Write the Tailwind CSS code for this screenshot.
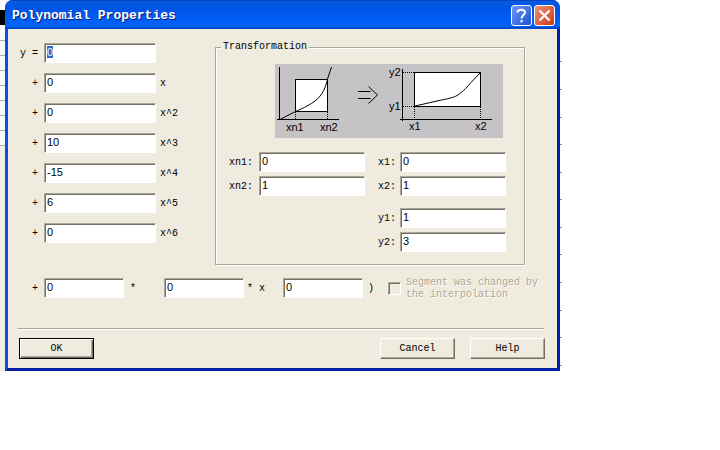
<!DOCTYPE html>
<html lang="en">
<head>
    <meta charset="UTF-8">
    <meta name="viewport" content="width=device-width, initial-scale=1.0">
    <title>Polynomial Properties</title>
    <script src="https://cdn.jsdelivr.net/npm/@tailwindcss/browser@4"></script>
</head>
<body class="relative bg-white font-['Liberation_Mono',monospace] text-[10px] leading-3 text-black">
    <!-- Graph window behind the dialog -->
    <svg class="absolute left-0 top-0 overflow-visible" width="564" height="376" viewBox="0 0 564 376" aria-hidden="true">
        <rect x="0" y="146" width="5" height="228" fill="#f1efe4"/>
        <rect x="5" y="370" width="128" height="4" fill="#ece8f4"/>
        <rect x="144" y="370" width="67" height="4" fill="#ece8f4"/>
        <rect x="0" y="10" width="8" height="15" fill="#000"/>
        <path stroke="#a9a9b4" d="M0 40.5h5M0 55.5h5M0 70.5h5M0 85.5h5M0 100.5h5M0 115.5h5M0 130.5h5M0 145.5h5"/>
        <path stroke="#7c7c94" d="M143.5 370v4"/>
        <path stroke="#000" d="M211.5 370v4"/>
        <path stroke="#7070b8" d="M253.5 370v3M295.5 370v3M337.5 370v3M378.5 370v3M420.5 370v3M461.5 370v3M503.5 370v3M544.5 370v3"/>
        <path stroke="#8888a8" d="M559 61.5h3M559 89.5h3M559 117.5h3M559 144.5h3M559 172.5h3M559 199.5h3M559 227.5h3M559 254.5h3M559 282.5h3M559 310.5h3M559 337.5h3M559 365.5h3"/>
    </svg>

    <main role="dialog" aria-labelledby="title" class="relative ml-[5px] max-w-[555px] overflow-hidden rounded-t-lg bg-[#0a3fd8]">
        <header class="flex h-[29px] items-center gap-0.5 bg-linear-to-b from-[#0a5be0] from-0% via-[#0054e6] via-30% to-[#0062fb] to-85% pl-[7px] pr-[5px] pt-0.5 shadow-[inset_0_-2px_0_#0048d0,inset_0_1px_0_#0844c0]">
            <h1 id="title" class="flex-1 text-[13px] font-bold leading-4 text-white [text-shadow:1px_1px_0_#0a1e80]">Polynomial Properties</h1>
            <button type="button" aria-label="Help" class="size-[21px] rounded-[3px] border border-white bg-linear-to-br from-[#6c97f2] to-[#1c50d8]">
                <svg class="mx-auto" width="19" height="19" viewBox="0 0 19 19" fill="none" stroke="#fff" stroke-width="2">
                    <path d="M5.5 6.5C5.5 3 13 2.8 13 6.5C13 9 9.5 9 9.5 12.500M9.500 14v2.200"/>
                </svg>
            </button>
            <button type="button" aria-label="Close" class="size-[21px] rounded-[3px] border border-white bg-linear-to-br from-[#f09070] to-[#cc3410]">
                <svg class="mx-auto" width="19" height="19" viewBox="0 0 19 19" fill="none" stroke="#fff" stroke-width="2.200">
                    <path d="M4.5 4.5l10 10M14.5 4.5l-10 10"/>
                </svg>
            </button>
        </header>

        <form class="border-x-3 border-b-3 border-b-[#0420a8] border-l-[#0c4fe0] border-r-[#0420a8] bg-[#efebde] pb-[9px] pt-3 [&_label]:pt-0.5 [&_span]:pt-0.5">
            <div class="flex">
                <!-- Coefficients -->
                <div class="mt-0.5 flex w-[207px] flex-col gap-2.5">
                    <div class="flex h-5 items-center">
                        <label for="c0" class="mr-1.5 w-[30px] text-right">y =</label>
                        <input id="c0" value="0" class="h-5 w-[112px] border border-b-white border-l-[#aca899] border-r-white border-t-[#aca899] bg-white pb-0.5 pl-0.5 font-['Liberation_Sans',sans-serif] text-[11px] caret-transparent shadow-[inset_1px_1px_0_#716f64] outline-none selection:bg-[#316ac5] selection:text-white">
                    </div>
                    <div class="flex h-5 items-center">
                        <label for="c1" class="mr-1.5 w-[30px] text-right">+</label>
                        <input id="c1" value="0" class="h-5 w-[112px] border border-b-white border-l-[#aca899] border-r-white border-t-[#aca899] bg-white pb-0.5 pl-0.5 font-['Liberation_Sans',sans-serif] text-[11px] shadow-[inset_1px_1px_0_#716f64]">
                        <span class="ml-1">x</span>
                    </div>
                    <div class="flex h-5 items-center">
                        <label for="c2" class="mr-1.5 w-[30px] text-right">+</label>
                        <input id="c2" value="0" class="h-5 w-[112px] border border-b-white border-l-[#aca899] border-r-white border-t-[#aca899] bg-white pb-0.5 pl-0.5 font-['Liberation_Sans',sans-serif] text-[11px] shadow-[inset_1px_1px_0_#716f64]">
                        <span class="ml-1">x^2</span>
                    </div>
                    <div class="flex h-5 items-center">
                        <label for="c3" class="mr-1.5 w-[30px] text-right">+</label>
                        <input id="c3" value="10" class="h-5 w-[112px] border border-b-white border-l-[#aca899] border-r-white border-t-[#aca899] bg-white pb-0.5 pl-0.5 font-['Liberation_Sans',sans-serif] text-[11px] shadow-[inset_1px_1px_0_#716f64]">
                        <span class="ml-1">x^3</span>
                    </div>
                    <div class="flex h-5 items-center">
                        <label for="c4" class="mr-1.5 w-[30px] text-right">+</label>
                        <input id="c4" value="-15" class="h-5 w-[112px] border border-b-white border-l-[#aca899] border-r-white border-t-[#aca899] bg-white pb-0.5 pl-0.5 font-['Liberation_Sans',sans-serif] text-[11px] shadow-[inset_1px_1px_0_#716f64]">
                        <span class="ml-1">x^4</span>
                    </div>
                    <div class="flex h-5 items-center">
                        <label for="c5" class="mr-1.5 w-[30px] text-right">+</label>
                        <input id="c5" value="6" class="h-5 w-[112px] border border-b-white border-l-[#aca899] border-r-white border-t-[#aca899] bg-white pb-0.5 pl-0.5 font-['Liberation_Sans',sans-serif] text-[11px] shadow-[inset_1px_1px_0_#716f64]">
                        <span class="ml-1">x^5</span>
                    </div>
                    <div class="flex h-5 items-center">
                        <label for="c6" class="mr-1.5 w-[30px] text-right">+</label>
                        <input id="c6" value="0" class="h-5 w-[112px] border border-b-white border-l-[#aca899] border-r-white border-t-[#aca899] bg-white pb-0.5 pl-0.5 font-['Liberation_Sans',sans-serif] text-[11px] shadow-[inset_1px_1px_0_#716f64]">
                        <span class="ml-1">x^6</span>
                    </div>
                </div>

                <fieldset class="mr-8 min-w-0 flex-1 border border-[#aca899] pb-3 pl-[13px] pt-[11px] shadow-[1px_1px_0_#fff,inset_1px_1px_0_#fff]">
                    <legend class="-ml-2 bg-[#efebde] px-0.5">Transformation</legend>
                    <svg class="ml-auto mr-[21px] bg-[#c6c3c6] font-['Liberation_Sans',sans-serif] text-[11px]" width="228" height="74" viewBox="275 64 228 74" fill="none" stroke="#000">
                        <path fill="#fff" d="M295.5 79.5h32v32h-32zM414.5 72.5h66v34h-66z" shape-rendering="crispEdges"/>
                        <path d="M279.5 67v53M277 119.5h62M402.5 69v52M400 119.5h92" shape-rendering="crispEdges"/>
                        <path stroke-dasharray="1 1" d="M295.5 112v7M327.5 112v7M414.5 107v12M480.5 107v12M403 72.5h11M403 106.5h11" shape-rendering="crispEdges"/>
                        <path d="M280 119.5L295.5 111.5C304 108 311 104 315 101C323 95 326 86 327.5 79L331.5 67"/>
                        <path d="M415 106L437 101C446 99 453 98 457 95.5C464 91 468 86 471 82.5L480 73"/>
                        <path d="M358 91.5h12.5M358 98.5h12.5M368.5 86.5l9 8.5l-9 8.5"/>
                        <g fill="#000" stroke="none">
                            <text x="286" y="131">xn1</text>
                            <text x="320" y="131">xn2</text>
                            <text x="389" y="76">y2</text>
                            <text x="389" y="110">y1</text>
                            <text x="409" y="130">x1</text>
                            <text x="475" y="130">x2</text>
                        </g>
                    </svg>
                    <div class="mr-[18px] mt-3.5 flex gap-[13px]">
                        <div class="flex flex-1 flex-col gap-1">
                            <div class="flex h-5 items-center">
                                <label for="xn1" class="w-[30px]">xn1:</label>
                                <input id="xn1" value="0" class="h-5 w-0 flex-1 border border-b-white border-l-[#aca899] border-r-white border-t-[#aca899] bg-white pb-0.5 pl-0.5 font-['Liberation_Sans',sans-serif] text-[11px] shadow-[inset_1px_1px_0_#716f64]">
                            </div>
                            <div class="flex h-5 items-center">
                                <label for="xn2" class="w-[30px]">xn2:</label>
                                <input id="xn2" value="1" class="h-5 w-0 flex-1 border border-b-white border-l-[#aca899] border-r-white border-t-[#aca899] bg-white pb-0.5 pl-0.5 font-['Liberation_Sans',sans-serif] text-[11px] shadow-[inset_1px_1px_0_#716f64]">
                            </div>
                        </div>
                        <div class="flex w-[128px] flex-col gap-1">
                            <div class="flex h-5 items-center">
                                <label for="x1" class="w-[22px]">x1:</label>
                                <input id="x1" value="0" class="h-5 w-0 flex-1 border border-b-white border-l-[#aca899] border-r-white border-t-[#aca899] bg-white pb-0.5 pl-0.5 font-['Liberation_Sans',sans-serif] text-[11px] shadow-[inset_1px_1px_0_#716f64]">
                            </div>
                            <div class="flex h-5 items-center">
                                <label for="x2" class="w-[22px]">x2:</label>
                                <input id="x2" value="1" class="h-5 w-0 flex-1 border border-b-white border-l-[#aca899] border-r-white border-t-[#aca899] bg-white pb-0.5 pl-0.5 font-['Liberation_Sans',sans-serif] text-[11px] shadow-[inset_1px_1px_0_#716f64]">
                            </div>
                            <div class="mt-2 flex h-5 items-center">
                                <label for="y1" class="w-[22px]">y1:</label>
                                <input id="y1" value="1" class="h-5 w-0 flex-1 border border-b-white border-l-[#aca899] border-r-white border-t-[#aca899] bg-white pb-0.5 pl-0.5 font-['Liberation_Sans',sans-serif] text-[11px] shadow-[inset_1px_1px_0_#716f64]">
                            </div>
                            <div class="flex h-5 items-center">
                                <label for="y2" class="w-[22px]">y2:</label>
                                <input id="y2" value="3" class="h-5 w-0 flex-1 border border-b-white border-l-[#aca899] border-r-white border-t-[#aca899] bg-white pb-0.5 pl-0.5 font-['Liberation_Sans',sans-serif] text-[11px] shadow-[inset_1px_1px_0_#716f64]">
                            </div>
                        </div>
                    </div>
                </fieldset>
            </div>

            <div class="mt-2.5 flex items-center">
                <label for="k1" class="mr-1.5 w-[30px] text-right">+</label>
                <input id="k1" value="0" class="h-5 w-20 border border-b-white border-l-[#aca899] border-r-white border-t-[#aca899] bg-white pb-0.5 pl-0.5 font-['Liberation_Sans',sans-serif] text-[11px] shadow-[inset_1px_1px_0_#716f64]">
                <label for="k2" class="w-10 pl-1.5">*</label>
                <input id="k2" value="0" class="h-5 w-20 border border-b-white border-l-[#aca899] border-r-white border-t-[#aca899] bg-white pb-0.5 pl-0.5 font-['Liberation_Sans',sans-serif] text-[11px] shadow-[inset_1px_1px_0_#716f64]">
                <label for="k3" class="w-[39px] pl-[3px]">* x</label>
                <input id="k3" value="0" class="h-5 w-20 border border-b-white border-l-[#aca899] border-r-white border-t-[#aca899] bg-white pb-0.5 pl-0.5 font-['Liberation_Sans',sans-serif] text-[11px] shadow-[inset_1px_1px_0_#716f64]">
                <span class="w-[25px] pl-[5px]">)</span>
                <input id="changed" type="checkbox" disabled class="size-[13px] appearance-none border border-b-white border-l-[#aca899] border-r-white border-t-[#aca899] shadow-[inset_1px_1px_0_#716f64]">
                <label for="changed" class="ml-[5px] text-[#aca899] [text-shadow:1px_1px_0_#fff]">Segment was changed by<br>the interpolation</label>
            </div>

            <hr class="ml-[9px] mr-[13px] mt-[27px] h-0.5 border-b border-t border-b-white border-t-[#aca899]">

            <div class="ml-[11px] mr-3 mt-2 flex gap-[15px]">
                <button type="submit" class="mr-auto h-[21px] w-[75px] border border-black bg-[#efebde] shadow-[inset_1px_1px_0_#fff,inset_-1px_-1px_0_#716f64,inset_-2px_-2px_0_#aca899]">OK</button>
                <button type="button" class="h-[21px] w-[75px] border border-b-[#716f64] border-l-white border-r-[#716f64] border-t-white bg-[#efebde] shadow-[inset_-1px_-1px_0_#aca899]">Cancel</button>
                <button type="button" class="h-[21px] w-[75px] border border-b-[#716f64] border-l-white border-r-[#716f64] border-t-white bg-[#efebde] shadow-[inset_-1px_-1px_0_#aca899]">Help</button>
            </div>
        </form>
    </main>

    <script>
    // The first coefficient is selected when the dialog opens
    const first = document.getElementById('c0');
    first.focus();
    first.select();
    </script>
</body>
</html>
